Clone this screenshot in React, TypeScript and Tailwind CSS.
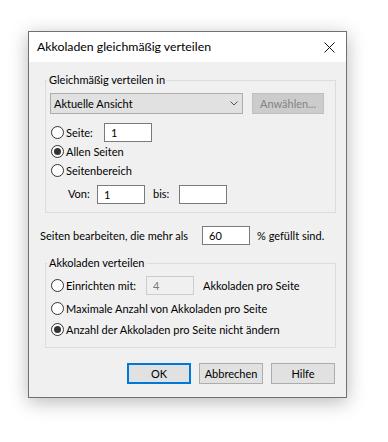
import React from 'react'

function Radio({ checked }: { checked?: boolean }) {
  return (
    <span className="flex h-[13px] w-[13px] shrink-0 items-center justify-center rounded-full border border-[#333333] bg-white">
      {checked && <span className="h-[7px] w-[7px] rounded-full bg-[#333333]" />}
    </span>
  )
}

function Field({ value, w = 'w-[48px]', disabled }: { value?: string; w?: string; disabled?: boolean }) {
  return (
    <div
      className={
        disabled
          ? `h-[19px] ${w} shrink-0 border border-[#cccccc] bg-[#f0f0f0] pl-[6px] leading-[17px] text-[#7a7a7a]`
          : `h-[19px] ${w} shrink-0 border border-[#7a7a7a] bg-white pl-[6px] leading-[17px] text-black`
      }
    >
      {value}
    </div>
  )
}

function Btn({ label, primary }: { label: string; primary?: boolean }) {
  return (
    <div
      className={
        primary
          ? 'flex h-[21px] w-[64px] items-center justify-center border-2 border-[#0078d7] bg-[#e1e1e1]'
          : 'flex h-[21px] w-[64px] items-center justify-center border border-[#adadad] bg-[#e1e1e1]'
      }
    >
      {label}
    </div>
  )
}

export default function App() {
  return (
    <div className="min-h-screen whitespace-nowrap bg-white pl-[28px] pt-[31px] font-['Lato',sans-serif] text-[11px] leading-[16px] text-black">
      <div className="flex h-[367px] w-[319px] flex-col border border-[#707070] bg-[#f0f0f0] shadow-[0_4px_18px_rgba(0,0,0,0.28)]">
        {/* title bar */}
        <div className="flex h-[30px] shrink-0 items-center justify-between bg-white pl-[8px] pr-[11px]">
          <span className="text-[12.3px]">Akkoladen gleichmäßig verteilen</span>
          <svg width="11" height="11" viewBox="0 0 11 11">
            <path d="M0.5 0.5 L10.5 10.5 M10.5 0.5 L0.5 10.5" stroke="#111" strokeWidth="1" />
          </svg>
        </div>

        {/* Gleichmäßig verteilen in */}
        <div className="ml-[16px] mt-[18px] w-[291px] border border-[#dcdcdc] pb-[9px]">
          <div className="-mt-[9px] ml-[1px] w-fit bg-[#f0f0f0] px-[2px]">Gleichmäßig verteilen in</div>
          <div className="ml-[4px] mt-[5px] flex gap-[9px]">
            <div className="flex h-[21px] w-[193px] items-center justify-between border border-[#adadad] bg-[#e1e1e1] pl-[3px] pr-[4px]">
              <span>Aktuelle Ansicht</span>
              <svg width="8" height="5" viewBox="0 0 8 5">
                <path d="M0.5 0.5 L4 4 L7.5 0.5" fill="none" stroke="#555" strokeWidth="1" />
              </svg>
            </div>
            <div className="flex h-[21px] w-[72px] items-center justify-center border border-[#bfbfbf] bg-[#cccccc] text-[#838383]">
              Anwählen...
            </div>
          </div>
          <div className="ml-[5px] mt-[9px] flex h-[19px] items-center">
            <div className="flex w-[53px] items-center gap-[2px]">
              <Radio />
              <span>Seite:</span>
            </div>
            <Field value="1" />
          </div>
          <div className="ml-[5px] flex h-[19px] items-center gap-[2px]">
            <Radio checked />
            <span>Allen Seiten</span>
          </div>
          <div className="ml-[5px] flex h-[19px] items-center gap-[2px]">
            <Radio />
            <span>Seitenbereich</span>
          </div>
          <div className="ml-[22px] mt-[5px] flex h-[18px] items-center">
            <span className="w-[29px]">Von:</span>
            <Field value="1" />
            <span className="ml-[8px] w-[26px]">bis:</span>
            <Field />
          </div>
        </div>

        {/* Prozent */}
        <div className="ml-[11px] mt-[13px] flex h-[19px] items-center">
          <span className="w-[162px]">Seiten bearbeiten, die mehr als</span>
          <Field value="60" />
          <span className="ml-[7px]">% gefüllt sind.</span>
        </div>

        {/* Akkoladen verteilen */}
        <div className="ml-[16px] mt-[18px] w-[291px] border border-[#dcdcdc] pb-[8px]">
          <div className="-mt-[9px] ml-[1px] w-fit bg-[#f0f0f0] px-[2px]">Akkoladen verteilen</div>
          <div className="ml-[5px] mt-[5px] flex h-[19px] items-center">
            <div className="flex w-[95px] items-center gap-[2px]">
              <Radio />
              <span>Einrichten mit:</span>
            </div>
            <Field value="4" disabled />
            <span className="ml-[9px]">Akkoladen pro Seite</span>
          </div>
          <div className="ml-[5px] mt-[4px] flex h-[19px] items-center gap-[2px]">
            <Radio />
            <span>Maximale Anzahl von Akkoladen pro Seite</span>
          </div>
          <div className="ml-[5px] mt-[2px] flex h-[19px] items-center gap-[2px]">
            <Radio checked />
            <span>Anzahl der Akkoladen pro Seite nicht ändern</span>
          </div>
        </div>

        {/* buttons */}
        <div className="mt-[15px] flex justify-end gap-[8px] pr-[11px]">
          <Btn label="OK" primary />
          <Btn label="Abbrechen" />
          <Btn label="Hilfe" />
        </div>
      </div>
    </div>
  )
}
